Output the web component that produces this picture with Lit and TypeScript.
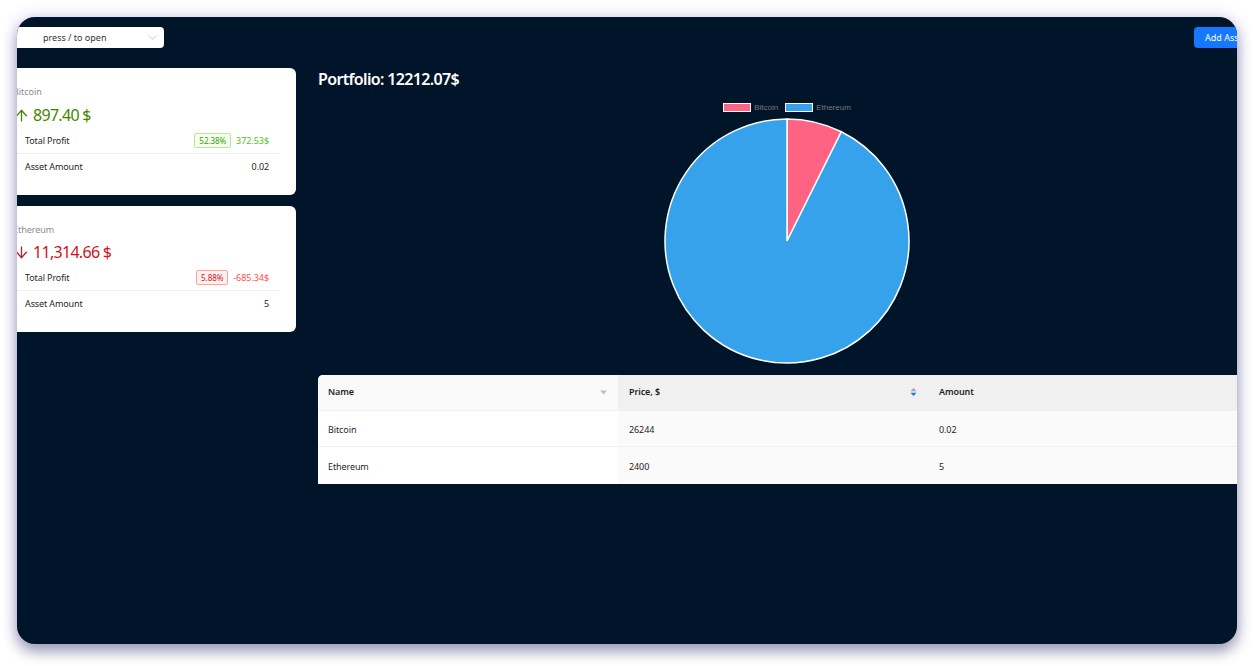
import { LitElement, html, css, svg } from "lit";
import { customElement } from "lit/decorators.js";

const UP = "M868 545.5L536.1 163a31.96 31.96 0 00-48.3 0L156 545.5a7.97 7.97 0 006 13.2h81c4.6 0 9-2 12.1-5.5L474 300.9V864c0 4.4 3.6 8 8 8h60c4.4 0 8-3.6 8-8V300.9l218.9 252.3c3 3.5 7.4 5.5 12.1 5.5h81c6.8 0 10.5-8 6-13.2z";
const DOWN = "M862 465.3h-81c-4.6 0-9 2-12.1 5.5L550 723.1V160c0-4.4-3.6-8-8-8h-60c-4.4 0-8 3.6-8 8v563.1L255.1 470.8c-3-3.5-7.4-5.5-12.1-5.5h-81c-6.8 0-10.5 8.1-6 13.2L487.9 861a31.96 31.96 0 0048.3 0L868 478.5c4.5-5.3.8-13.2-6-13.2z";

const assets = [
  { name: "Bitcoin", up: true, value: "897.40 $", pct: "52.38%", profit: "372.53$", amount: "0.02", price: "26244" },
  { name: "Ethereum", up: false, value: "11,314.66 $", pct: "5.88%", profit: "-685.34$", amount: "5", price: "2400" },
];

@customElement("app-root")
export class AppRoot extends LitElement {
  static styles = css`
    :host {
      display: block;
      box-sizing: border-box;
      width: 1254px;
      height: 666px;
      padding: 17px 17px 22px;
      background: #fff;
      font-family: "Noto Sans", "Open Sans", sans-serif;
      overflow: hidden;
    }
    .shell {
      height: 627px;
      background: #001529;
      border-radius: 18px;
      overflow: hidden;
      box-shadow: 0 8px 14px rgba(40, 40, 90, 0.4), 0 0 16px rgba(90, 90, 200, 0.25);
    }
    .page {
      width: 1259px;
      margin-left: -20px;
      padding-top: 10px;
    }
    .header {
      display: flex;
      justify-content: space-between;
      height: 21px;
    }
    .select {
      width: 167px;
      height: 21px;
      box-sizing: border-box;
      background: #fff;
      border-radius: 4px;
      padding: 0 7px 0 46px;
      display: flex;
      align-items: center;
      justify-content: space-between;
      font-size: 9px;
      color: #333;
    }
    .select svg { width: 9px; height: 9px; }
    .btn {
      width: 62px;
      height: 21px;
      box-sizing: border-box;
      background: #1677ff;
      color: #fff;
      border-radius: 4px;
      font-size: 9px;
      padding-left: 11px;
      display: flex;
      align-items: center;
      white-space: nowrap;
    }
    .body {
      display: flex;
      gap: 22px;
      margin-top: 20px;
    }
    .sider {
      width: 299px;
      flex: none;
      display: flex;
      flex-direction: column;
      gap: 11px;
    }
    .card {
      background: #fff;
      border-radius: 6px;
      height: 127px;
      box-sizing: border-box;
      padding: 18px 17px 0 16px;
    }
    .card + .card { height: 126px; }
    .label { font-size: 9px; color: #8c8c8c; line-height: 12px; letter-spacing: -0.05px; }
    .value {
      display: flex;
      align-items: center;
      gap: 4px;
      font-size: 16px;
      letter-spacing: -0.7px;
      line-height: 22px;
      margin: 6px 0 0 1px;
    }
    .card + .card .value { margin-top: 5px; }
    .value svg { width: 15px; height: 15px; fill: currentColor; flex: none; }
    .value.up { color: #3f8600; }
    .value.down { color: #cf1322; }
    .row {
      display: flex;
      justify-content: space-between;
      align-items: center;
      height: 24px;
      padding: 0 10px 0 10px;
      margin-left: -1px;
      font-size: 9px;
      letter-spacing: -0.12px;
      color: #1f1f1f;
    }
    .row > span:first-child { margin-left: 3px; }
    .row.first { height: 26px; margin-top: 1px; border-bottom: 1px solid #f0f0f0; }
    .right { display: flex; align-items: center; gap: 5px; letter-spacing: -0.06px; }
    .tag {
      font-size: 8px;
      line-height: 13px;
      padding: 0 4px;
      border-radius: 2px;
      border: 1px solid;
    }
    .tag.up { color: #389e0d; background: #f6ffed; border-color: #b7eb8f; }
    .tag.down { color: #cf1322; background: #fff1f0; border-color: #ffa39e; }
    .profit.up { color: #52c41a; }
    .profit.down { color: #ff4d4f; }
    .main { flex: 1; min-width: 0; }
    .title {
      font-size: 16px;
      letter-spacing: -0.65px;
      font-weight: 600;
      color: #fff;
      line-height: 22px;
      margin: 0;
    }
    .chart {
      display: flex;
      flex-direction: column;
      align-items: center;
      margin-top: 12px;
    }
    .legend {
      display: flex;
      gap: 7px;
      height: 10px;
      align-items: center;
      font-family: "Liberation Sans", Arial, sans-serif;
      font-size: 8px;
      color: #777;
    }
    .legend span { display: flex; align-items: center; gap: 3px; }
    .swatch {
      width: 28px;
      height: 9px;
      box-sizing: border-box;
      border: 1.5px solid #fff;
    }
    .pie { display: block; margin-top: 6px; }
    .table {
      display: grid;
      grid-template-columns: 300px 310px 1fr;
      margin-top: 11px;
      font-size: 9px;
      color: #1f1f1f;
      border-radius: 5px 0 0 0;
      overflow: hidden;
      background: #fff;
    }
    .c {
      height: 36px;
      box-sizing: border-box;
      display: flex;
      align-items: center;
      justify-content: space-between;
      padding: 1px 11px 0;
      border-bottom: 1px solid #f0f0f0;
      letter-spacing: -0.1px;
    }
    .c.n { padding-left: 10px; }
    .h { font-weight: 600; background: #fafafa; padding-top: 0; padding-bottom: 2px; }
    .h.s { background: #f0f0f0; }
    .g { background: #fafafa; }
    .last { height: 37px; border-bottom: 0; }
    .caret { width: 7px; height: 10px; }
  `;

  private pie() {
    const cx = 123, cy = 123, r = 122;
    const a = (897.4 / 12212.07) * 2 * Math.PI;
    const x = cx + r * Math.sin(a), y = cy - r * Math.cos(a);
    return html`<svg class="pie" width="246" height="246" viewBox="0 0 246 246">
      ${svg`<path d="M${cx} ${cy}L${cx} ${cy - r}A${r} ${r} 0 0 1 ${x} ${y}Z" fill="#ff6384" stroke="#fff" stroke-width="1.5"/>
      <path d="M${cx} ${cy}L${x} ${y}A${r} ${r} 0 1 1 ${cx} ${cy - r}Z" fill="#36a2eb" stroke="#fff" stroke-width="1.5"/>`}
    </svg>`;
  }

  render() {
    return html`<div class="shell"><div class="page">
      <div class="header">
        <div class="select">
          <span>press / to open</span>
          <svg viewBox="0 0 10 10" fill="none" stroke="#bfbfbf" stroke-width="0.9"><path d="M1 3l4 4 4-4"/></svg>
        </div>
        <div class="btn">Add Asset</div>
      </div>
      <div class="body">
        <div class="sider">
          ${assets.map((a) => html`<div class="card">
            <div class="label">${a.name}</div>
            <div class="value ${a.up ? "up" : "down"}">
              <svg viewBox="64 64 896 896"><path d="${a.up ? UP : DOWN}"/></svg>
              <span>${a.value}</span>
            </div>
            <div class="row first">
              <span>Total Profit</span>
              <span class="right">
                <span class="tag ${a.up ? "up" : "down"}">${a.pct}</span>
                <span class="profit ${a.up ? "up" : "down"}">${a.profit}</span>
              </span>
            </div>
            <div class="row"><span>Asset Amount</span><span>${a.amount}</span></div>
          </div>`)}
        </div>
        <div class="main">
          <h1 class="title">Portfolio: 12212.07$</h1>
          <div class="chart">
            <div class="legend">
              <span><i class="swatch" style="background:#ff6384"></i>Bitcoin</span>
              <span><i class="swatch" style="background:#36a2eb"></i>Ethereum</span>
            </div>
            ${this.pie()}
          </div>
          <div class="table">
            <div class="c h n">Name
              <svg class="caret" viewBox="0 0 7 10"><path d="M0 3.5h7L3.5 7.5z" fill="#bfbfbf"/></svg>
            </div>
            <div class="c h s">Price, $
              <svg class="caret" viewBox="0 0 7 10"><path d="M0.5 4.3h6L3.5 1z" fill="#a6a6a6"/><path d="M0.5 5.7h6L3.5 9z" fill="#1677ff"/></svg>
            </div>
            <div class="c h s">Amount</div>
            ${assets.map((a, i) => {
              const l = i === assets.length - 1 ? "last" : "";
              return html`<div class="c n ${l}">${a.name}</div>
                <div class="c g ${l}">${a.price}</div>
                <div class="c g ${l}">${a.amount}</div>`;
            })}
          </div>
        </div>
      </div>
    </div></div>`;
  }
}
